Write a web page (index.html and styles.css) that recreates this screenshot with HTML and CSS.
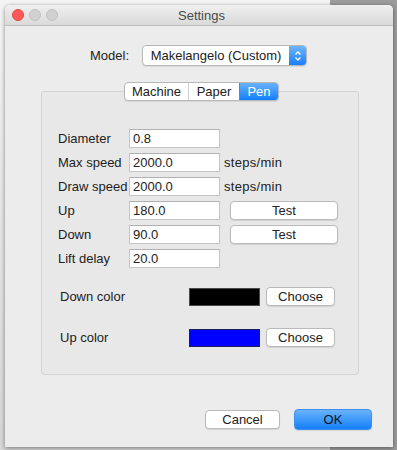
FILE: index.html
```html
<!DOCTYPE html>
<html>
<head>
<meta charset="utf-8">
<link rel="stylesheet" href="styles.css">
</head>
<body>
<div class="desk"></div>
<div class="window">
  <div class="titlebar">
    <div class="lights">
      <span class="light red"></span>
      <span class="light"></span>
      <span class="light"></span>
    </div>
    <div class="title">Settings</div>
  </div>
  <div class="content">
    <div class="model-row">
      <span class="model-label">Model:</span>
      <div class="combo">
        <span class="combo-text">Makelangelo (Custom)</span>
        <span class="stepper">
          <svg width="8" height="12" viewBox="0 0 8 12"><path d="M1.5 4.5 L4 2 L6.5 4.5 M1.5 7.5 L4 10 L6.5 7.5" fill="none" stroke="#fff" stroke-width="1.3"/></svg>
        </span>
      </div>
    </div>
    <div class="tabs">
      <span class="tab">Machine</span>
      <span class="tab">Paper</span>
      <span class="tab active">Pen</span>
    </div>
    <div class="panel">
      <div class="form">
        <span class="lbl">Diameter</span><span class="field">0.8</span><span></span>
        <span class="lbl">Max speed</span><span class="field">2000.0</span><span class="unit">steps/min</span>
        <span class="lbl">Draw speed</span><span class="field">2000.0</span><span class="unit">steps/min</span>
        <span class="lbl">Up</span><span class="field">180.0</span><span class="btn test">Test</span>
        <span class="lbl">Down</span><span class="field">90.0</span><span class="btn test">Test</span>
        <span class="lbl">Lift delay</span><span class="field">20.0</span><span></span>
      </div>
      <div class="colors">
        <span class="clbl">Down color</span><span class="swatch black"></span><span class="btn choose">Choose</span>
        <span class="clbl">Up color</span><span class="swatch blue"></span><span class="btn choose">Choose</span>
      </div>
    </div>
    <div class="actions">
      <span class="btn cancel">Cancel</span>
      <span class="btn ok">OK</span>
    </div>
  </div>
</div>
</body>
</html>
```
FILE: styles.css
```css
* { box-sizing: border-box; }
html, body { margin: 0; padding: 0; }
body {
  width: 397px;
  height: 450px;
  overflow: hidden;
  background: linear-gradient(#f4f4f4, #d6d6d6);
  font-family: "Liberation Sans", Arial, sans-serif;
  font-size: 13px;
  color: #222;
  padding: 5px 5px 0 5px;
  position: relative;
}
.desk {
  position: absolute;
  right: 0;
  top: 0;
  width: 67px;
  height: 450px;
  background: #9c9c9c;
}
.window {
  position: relative;
  width: 388px;
  height: 442px;
  background: #ececec;
  border-radius: 5px 5px 0 0;
  box-shadow: 0 1px 4px rgba(0,0,0,0.45);
  display: flex;
  flex-direction: column;
}
.titlebar {
  height: 21px;
  background: linear-gradient(#efefef, #dadada);
  border-bottom: 1px solid #bdbdbd;
  border-radius: 5px 5px 0 0;
  display: flex;
  align-items: center;
}
.lights {
  display: flex;
  gap: 5px;
  padding-left: 7px;
}
.light {
  width: 12px;
  height: 12px;
  border-radius: 50%;
  background: #d1d1d1;
  border: 1px solid #c1c1c1;
}
.light.red { background: #fc5b57; border-color: #e2463f; }
.title {
  flex: 1;
  text-align: center;
  margin-right: 48px;
  color: #4a4a4a;
  font-size: 13px;
}
.content {
  flex: 1;
  display: flex;
  flex-direction: column;
  align-items: flex-start;
  padding: 0 0 0 36px;
}
.model-row {
  display: flex;
  align-items: center;
  margin-top: 19px;
  padding-left: 49px;
  gap: 13px;
}
.model-label { color: #222; }
.combo {
  width: 165px;
  height: 21px;
  background: #fff;
  border: 1px solid #b8b8b8;
  border-radius: 4px;
  display: flex;
  overflow: hidden;
  box-shadow: 0 1px 1px rgba(0,0,0,0.08);
}
.combo-text {
  flex: 1;
  text-align: center;
  line-height: 19px;
}
.stepper {
  width: 17px;
  background: linear-gradient(#6fb5fb, #1a7ff8);
  display: flex;
  align-items: center;
  justify-content: center;
}
.tabs {
  display: flex;
  margin-left: 83px;
  margin-top: 16px;
  height: 19px;
  border: 1px solid #b8b8b8;
  border-radius: 4px;
  background: #fff;
  overflow: hidden;
  position: relative;
  z-index: 1;
  margin-bottom: -10px;
  box-shadow: 0 1px 1px rgba(0,0,0,0.08);
}
.tab {
  line-height: 17px;
  border-left: 1px solid #cfcfcf;
  text-align: center;
}
.tab:first-child { border-left: none; width: 63px; }
.tab:nth-child(2) { width: 51px; }
.tab.active {
  width: 39px;
  background: linear-gradient(#69b2fb, #1180fb);
  color: #fff;
  border-left-color: #3a8ff5;
}
.panel {
  width: 318px;
  height: 284px;
  background: #e8e8e8;
  border: 1px solid #d4d4d4;
  border-radius: 3px;
  padding: 37px 0 0 16px;
}
.form {
  display: grid;
  grid-template-columns: 71px 91px auto;
  grid-auto-rows: 19px;
  row-gap: 5px;
  align-items: center;
}
.lbl { line-height: 19px; white-space: nowrap; }
.field {
  height: 19px;
  background: #fff;
  border: 1px solid #c4c4c4;
  border-top-color: #b0b0b0;
  padding-left: 3px;
  line-height: 17px;
}
.unit {
  padding-left: 4px;
  letter-spacing: 0.3px;
}
.btn {
  display: inline-flex;
  align-items: center;
  justify-content: center;
  height: 19px;
  background: #fff;
  border: 1px solid #bababa;
  border-radius: 4px;
  box-shadow: 0 1px 1px rgba(0,0,0,0.1);
}
.test {
  width: 108px;
  margin-left: 10px;
}
.colors {
  display: grid;
  grid-template-columns: 129px 71px 75px;
  grid-auto-rows: 19px;
  row-gap: 22px;
  align-items: center;
  margin-top: 19px;
  padding-left: 2px;
}
.swatch {
  height: 18px;
  width: 71px;
  border: 1px solid #4a4a4a;
}
.swatch.black { background: #000; }
.swatch.blue { background: #0000ff; border-color: #1c1c60; }
.choose {
  width: 69px;
  margin-left: 6px;
}
.actions {
  align-self: stretch;
  display: flex;
  justify-content: flex-end;
  align-items: center;
  gap: 14px;
  margin-top: 34px;
  padding-right: 21px;
}
.cancel { width: 75px; }
.ok {
  width: 78px;
  height: 21px;
  background: linear-gradient(#6ab3fb, #1480fa);
  border-color: #3d8ff0;
  color: #111;
}
```
